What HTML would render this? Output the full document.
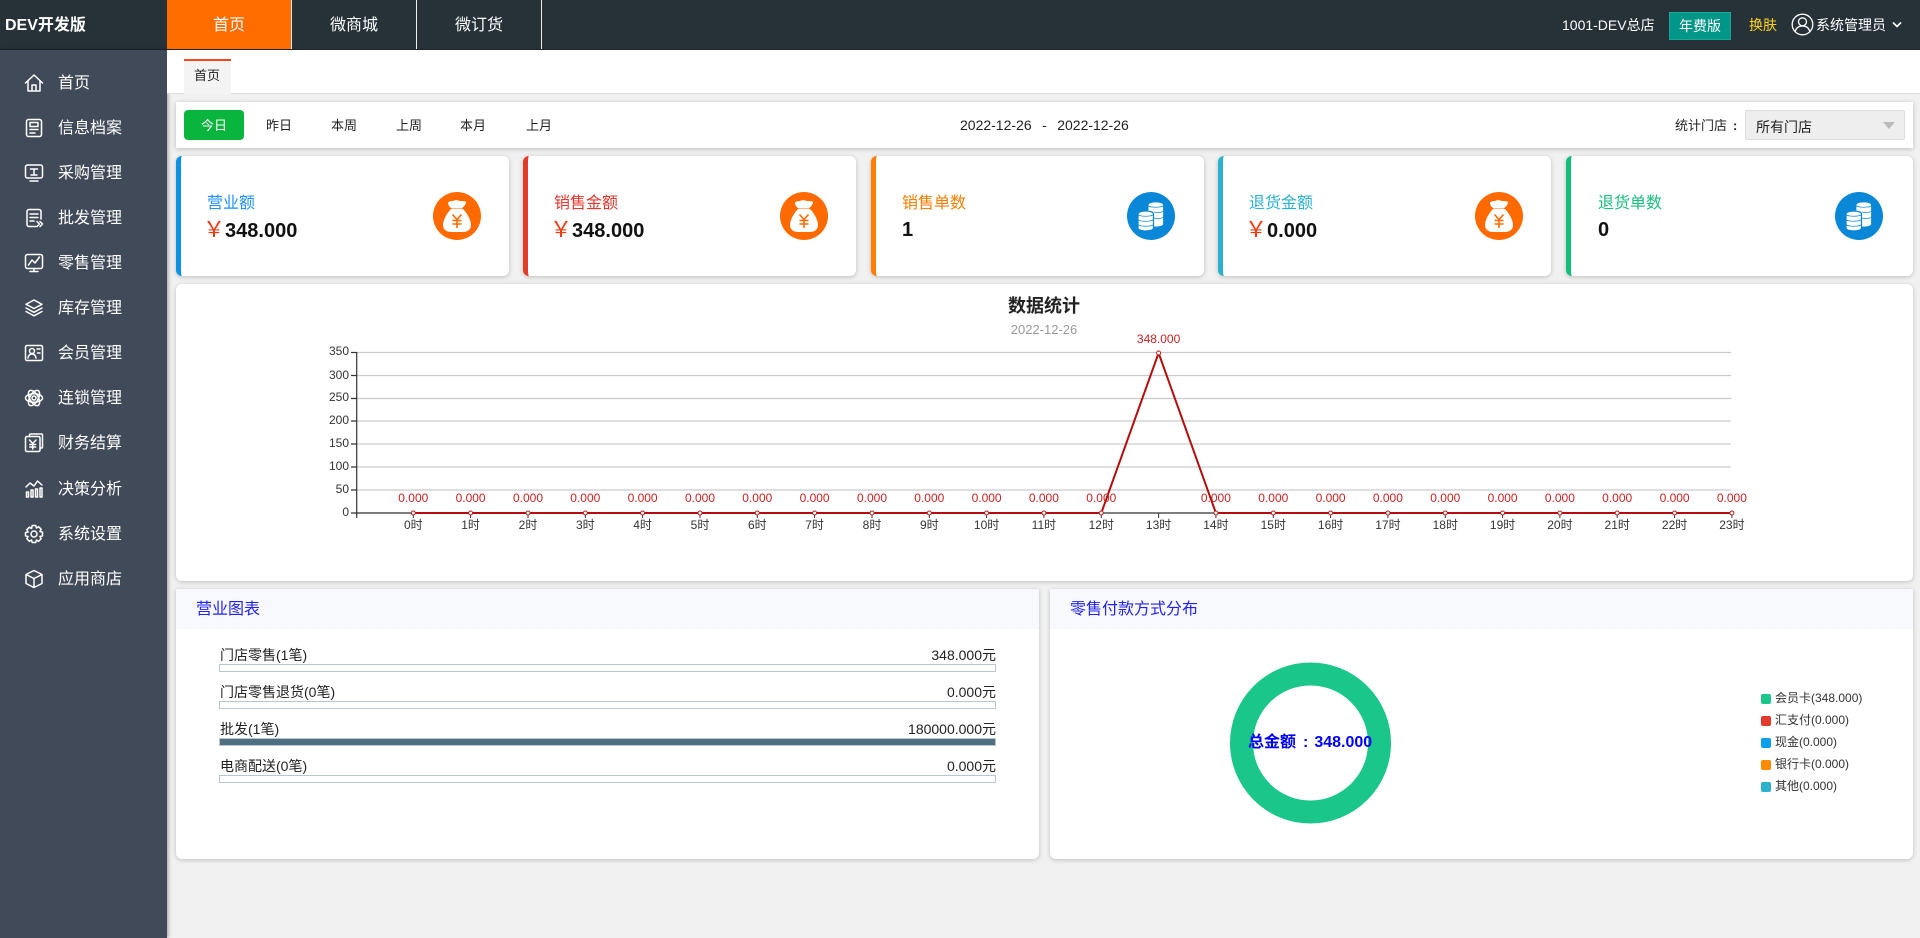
<!DOCTYPE html>
<html lang="zh"><head><meta charset="utf-8"><title>DEV开发版</title>
<style>
*{box-sizing:border-box}
html,body{margin:0;padding:0}
body{width:1920px;height:938px;overflow:hidden;position:relative;background:#f1f1f1;font-family:"Liberation Sans","Noto Sans CJK SC",sans-serif;color:#222}
.a{position:absolute}
.t{position:absolute;white-space:nowrap;line-height:20px}
.header{left:0;top:0;width:1920px;height:50px;background:#263238;border-bottom:1px solid #1c252c}
.logo{left:5px;top:16px;font-size:16px;font-weight:bold;color:#fff}
.nav{top:0;width:125px;height:49px;color:#fff;font-size:16px;text-align:center;line-height:51px;border-right:1px solid #eee}
.side{left:0;top:50px;width:167px;height:888px;background:#414a58;box-shadow:1px 0 4px rgba(0,0,0,.35)}
.mi{position:absolute;left:58px;color:#fff;font-size:16px;line-height:20px;white-space:nowrap;margin-top:1px}
.ic{position:absolute;left:24px;width:20px;height:20px;fill:none;stroke:#fff;stroke-width:1.5;stroke-linejoin:round;stroke-linecap:round}
.panel{background:#fff;box-shadow:0 1px 5px rgba(0,0,0,.22)}
.f{top:116px;font-size:13px;color:#222;width:40px;text-align:center}
.card{top:156px;width:333px;height:120px;background:#fff;border-radius:6px;border-left:5px solid;box-shadow:0 1px 5px rgba(0,0,0,.22)}
.lb{top:194px;font-size:16px}
.val{top:219px;font-size:20px;font-weight:bold;color:#111;line-height:22px}
.val i{font-style:normal;font-weight:normal;color:#f03a10;font-size:22px;margin-left:-4px;margin-right:0}
.circ{top:192px;width:48px;height:48px}
.bar{left:219px;width:777px;height:8px;border:1px solid #b9c6d0;background:#fff}
.bl{left:220px;font-size:14px;color:#222}
.br{right:924px;font-size:14px;color:#222}
.ttl{top:600px;font-size:16px;color:#2222ee}
.lg{left:1775px;font-size:12px;color:#333;line-height:16px;white-space:nowrap;position:absolute;margin-top:-2px}
.mk{position:absolute;left:1761px;width:10px;height:10px;border-radius:2px;margin-top:-1px}
</style></head><body>

<div class="a header"></div>
<div class="t logo">DEV开发版</div>
<div class="a nav" style="left:167px;background:#ff6c00">首页</div>
<div class="a nav" style="left:292px">微商城</div>
<div class="a nav" style="left:417px">微订货</div>
<div class="t" style="left:1562px;top:15px;font-size:14px;color:#fff">1001-DEV总店</div>
<div class="a" style="left:1669px;top:12px;width:62px;height:28px;background:#009688;border:1px solid #16a99a;color:#fff;font-size:14px;line-height:27px;text-align:center">年费版</div>
<div class="t" style="left:1749px;top:15px;font-size:14px;color:#ffd21f">换肤</div>
<svg class="a" style="left:1791px;top:13px" width="23" height="23" viewBox="0 0 23 23" fill="none" stroke="#fff" stroke-width="1.3"><circle cx="11.5" cy="11.5" r="10.3"/><circle cx="11.5" cy="8.8" r="4"/><path d="M4.2 18.6c1-4 4-5.6 7.3-5.6s6.300 1.600 7.300 5.600"/></svg>
<div class="t" style="left:1816px;top:15px;font-size:14px;color:#fff">系统管理员</div>
<svg class="a" style="left:1892px;top:21px" width="10" height="8" viewBox="0 0 10 8" fill="none" stroke="#fff" stroke-width="1.6"><path d="M1 1.500l4 4 4-4"/></svg>

<div class="a side"></div>
<svg class="ic" style="top:73px" viewBox="0 0 20 20"><path d="M1.500 10L10 2l8.500 8M4 8v10h12V8M8 18v-6h4v6"/></svg>
<div class="mi" style="top:73px">首页</div>
<svg class="ic" style="top:118px" viewBox="0 0 20 20"><rect x="2.500" y="1.500" width="15" height="17" rx="2"/><rect x="6" y="4.500" width="8" height="4"/><path d="M6 11.500h8M6 15h5"/></svg>
<div class="mi" style="top:118px">信息档案</div>
<svg class="ic" style="top:163px" viewBox="0 0 20 20"><rect x="1.500" y="2" width="17" height="13" rx="2"/><path d="M6 18h8M6.500 6h7M10 6v6M7 12h6"/></svg>
<div class="mi" style="top:163px">采购管理</div>
<svg class="ic" style="top:208px" viewBox="0 0 20 20"><path d="M17 11V3.500a2 2 0 0 0-2-2H5a2 2 0 0 0-2 2v13a2 2 0 0 0 2 2h7M6 6h8M6 9.500h8M6 13h4M13 13.500l2.500 2.500-2.500 2.500M16 13.500l2.500 2.500-2.500 2.500"/></svg>
<div class="mi" style="top:208px">批发管理</div>
<svg class="ic" style="top:253px" viewBox="0 0 20 20"><rect x="1.500" y="1.500" width="17" height="14" rx="2"/><path d="M6 18.500h8M4.500 12l3.500-5 3 3 4.500-6M10 15.500v3"/></svg>
<div class="mi" style="top:253px">零售管理</div>
<svg class="ic" style="top:298px" viewBox="0 0 20 20"><path d="M10 2l8 4.300-8 4.200-8-4.200zM2 10l8 4.300 8-4.300M2 13.500l8 4.300 8-4.300"/></svg>
<div class="mi" style="top:298px">库存管理</div>
<svg class="ic" style="top:343px" viewBox="0 0 20 20"><rect x="1.500" y="2.500" width="17" height="15" rx="1.500"/><circle cx="8" cy="8" r="2.500"/><path d="M4 15c.5-3 2-4 4-4s3.500 1 4 4M13 6h3M13.500 10h2.500"/></svg>
<div class="mi" style="top:343px">会员管理</div>
<svg class="ic" style="top:388px" viewBox="0 0 20 20"><ellipse cx="10" cy="10" rx="8.500" ry="4.200"/><ellipse cx="10" cy="10" rx="8.500" ry="4.200" transform="rotate(60 10 10)"/><ellipse cx="10" cy="10" rx="8.500" ry="4.200" transform="rotate(120 10 10)"/><circle cx="10" cy="10" r="2"/></svg>
<div class="mi" style="top:388px">连锁管理</div>
<svg class="ic" style="top:433px" viewBox="0 0 20 20"><path d="M5.500 3.500V2a1 1 0 0 1 1-1h11a1 1 0 0 1 1 1v12a1 1 0 0 1-1 1h-1.500"/><rect x="1.500" y="3.500" width="14.500" height="15" rx="1.500"/><path d="M5.500 7l3.200 3.500L12 7M8.700 10.500V16M5.800 11.500h5.800M5.800 14h5.800"/></svg>
<div class="mi" style="top:433px">财务结算</div>
<svg class="ic" style="top:479px" viewBox="0 0 20 20"><path d="M2 8l4-4 4 3 3.500-5L18 6M2.500 18v-5h2v5zM7 18v-7h2v7zM11.500 18v-8h2v8zM16 18v-9h2v9z"/></svg>
<div class="mi" style="top:479px">决策分析</div>
<svg class="ic" style="top:524px" viewBox="0 0 20 20"><path d="M8.200 1.500h3.600l.6 2.500 2.200-1.300 2.600 2.600-1.300 2.200 2.600.6v3.800l-2.600.6 1.300 2.200-2.600 2.600-2.200-1.300-.6 2.500H8.200l-.6-2.500-2.200 1.300-2.600-2.600 1.300-2.200-2.600-.6V8.600l2.600-.6-1.300-2.200 2.600-2.600 2.200 1.300z"/><circle cx="10" cy="10" r="3"/></svg>
<div class="mi" style="top:524px">系统设置</div>
<svg class="ic" style="top:569px" viewBox="0 0 20 20"><path d="M10 1.500l8 4v9l-8 4-8-4v-9zM2 5.500l8 4 8-4M10 9.500v9"/></svg>
<div class="mi" style="top:569px">应用商店</div>

<div class="a" style="left:167px;top:50px;width:1753px;height:44px;background:#fff;border-bottom:1px solid #ddd"></div>
<div class="a" style="left:184px;top:59px;width:47px;height:35px;background:#f4f4f4;border-top:2px solid #f4471c"></div>
<div class="t" style="left:194px;top:66px;font-size:13px;color:#222">首页</div>

<div class="a panel" style="left:176px;top:102px;width:1737px;height:46px"></div>
<div class="a" style="left:184px;top:110px;width:60px;height:30px;background:#09b53c;border-radius:4px;color:#fff;font-size:13px;line-height:31px;text-align:center">今日</div>
<div class="t f" style="left:259px">昨日</div>
<div class="t f" style="left:324px">本周</div>
<div class="t f" style="left:389px">上周</div>
<div class="t f" style="left:453px">本月</div>
<div class="t f" style="left:519px">上月</div>
<div class="t" style="left:960px;top:115px;font-size:14px;color:#222;white-space:pre;word-spacing:-.4px">2022-12-26   -   2022-12-26</div>
<div class="t" style="left:1675px;top:116px;font-size:13px;color:#222">统计门店<span style="margin-left:6px;font-weight:bold">:</span></div>
<div class="a" style="left:1745px;top:110px;width:160px;height:30px;background:#eee;border:1px solid #ddd;border-radius:2px"></div>
<div class="t" style="left:1756px;top:117px;font-size:14px;color:#222">所有门店</div>
<div class="a" style="left:1883px;top:122px;width:0;height:0;border-left:6px solid transparent;border-right:6px solid transparent;border-top:7px solid #bbb"></div>

<div class="a card" style="left:176px;border-left-color:#0c92e0"></div>
<div class="a card" style="left:523px;border-left-color:#e43a2c"></div>
<div class="a card" style="left:871px;border-left-color:#ff7d00"></div>
<div class="a card" style="left:1218px;border-left-color:#2bb0d2"></div>
<div class="a card" style="left:1566px;width:347px;border-left-color:#12bf78"></div>

<div class="t lb" style="left:207px;color:#1e90ff">营业额</div>
<div class="t val" style="left:207px"><i>￥</i>348.000</div>
<div class="t lb" style="left:554px;color:#e8342a">销售金额</div>
<div class="t val" style="left:554px"><i>￥</i>348.000</div>
<div class="t lb" style="left:902px;color:#ff7d00">销售单数</div>
<div class="t val" style="left:902px">1</div>
<div class="t lb" style="left:1249px;color:#2bb0d2">退货金额</div>
<div class="t val" style="left:1249px"><i>￥</i>0.000</div>
<div class="t lb" style="left:1598px;color:#1abf7c">退货单数</div>
<div class="t val" style="left:1598px">0</div>

<svg class="a circ" style="left:433px" viewBox="0 0 48 48"><circle cx="24" cy="24" r="24" fill="#ff6a00"/><path fill="#fff" d="M15 10.500c2-2 5-1 6-2 2-1 5 0 6 .5 2 0 5 0 6 1 0 3-3 5-4 6.500H19c-2-1-4-3-4-6zM18 17h12c4 4 8 11 8 16 0 5-4 7-8 7H18c-4 0-8-2-8-7 0-5 4-12 8-16z"/><path fill="none" stroke="#ff6a00" stroke-width="1.600" d="M19.500 22.500l4.500 5 4.500-5M24 27.500V36M19.500 28.500h9M19.500 32h9"/></svg>
<svg class="a circ" style="left:780px" viewBox="0 0 48 48"><circle cx="24" cy="24" r="24" fill="#ff6a00"/><path fill="#fff" d="M15 10.500c2-2 5-1 6-2 2-1 5 0 6 .5 2 0 5 0 6 1 0 3-3 5-4 6.500H19c-2-1-4-3-4-6zM18 17h12c4 4 8 11 8 16 0 5-4 7-8 7H18c-4 0-8-2-8-7 0-5 4-12 8-16z"/><path fill="none" stroke="#ff6a00" stroke-width="1.600" d="M19.500 22.500l4.500 5 4.500-5M24 27.500V36M19.500 28.500h9M19.500 32h9"/></svg>
<svg class="a circ" style="left:1127px" viewBox="0 0 48 48"><circle cx="24" cy="24" r="24" fill="#0a87d6"/><path fill="#fff" stroke="#0a87d6" stroke-width=".8" d="M21 13c0-4 15.500-4 15.500 0v19c0 4-15.500 4-15.500 0z"/><path fill="none" stroke="#0a87d6" stroke-width=".7" d="M21 13c0 3 15.500 3 15.500 0M27 20c3 1 8 .5 9.500-1M27 26c3 1 8 .5 9.500-1"/><path fill="#fff" stroke="#0a87d6" stroke-width="1.200" d="M11 22c0-4 15.500-4 15.500 0v14c0 4-15.500 4-15.500 0z"/><path fill="none" stroke="#0a87d6" stroke-width=".7" d="M11 22c0 3 15.500 3 15.500 0M11 27c0 3 15.500 3 15.500 0M11 32c0 3 15.500 3 15.500 0"/></svg>
<svg class="a circ" style="left:1475px" viewBox="0 0 48 48"><circle cx="24" cy="24" r="24" fill="#ff6a00"/><path fill="#fff" d="M15 10.500c2-2 5-1 6-2 2-1 5 0 6 .5 2 0 5 0 6 1 0 3-3 5-4 6.500H19c-2-1-4-3-4-6zM18 17h12c4 4 8 11 8 16 0 5-4 7-8 7H18c-4 0-8-2-8-7 0-5 4-12 8-16z"/><path fill="none" stroke="#ff6a00" stroke-width="1.600" d="M19.500 22.500l4.500 5 4.500-5M24 27.500V36M19.500 28.500h9M19.500 32h9"/></svg>
<svg class="a circ" style="left:1835px" viewBox="0 0 48 48"><circle cx="24" cy="24" r="24" fill="#0a87d6"/><path fill="#fff" stroke="#0a87d6" stroke-width=".8" d="M21 13c0-4 15.500-4 15.500 0v19c0 4-15.500 4-15.500 0z"/><path fill="none" stroke="#0a87d6" stroke-width=".7" d="M21 13c0 3 15.500 3 15.500 0M27 20c3 1 8 .5 9.500-1M27 26c3 1 8 .5 9.500-1"/><path fill="#fff" stroke="#0a87d6" stroke-width="1.200" d="M11 22c0-4 15.500-4 15.500 0v14c0 4-15.500 4-15.500 0z"/><path fill="none" stroke="#0a87d6" stroke-width=".7" d="M11 22c0 3 15.500 3 15.500 0M11 27c0 3 15.500 3 15.500 0M11 32c0 3 15.500 3 15.500 0"/></svg>

<div class="a panel" style="left:176px;top:284px;width:1737px;height:297px;border-radius:6px"></div>
<svg class="a" style="left:0;top:0" width="1920" height="938" viewBox="0 0 1920 938" font-family="'Liberation Sans','Noto Sans CJK SC',sans-serif" font-size="12">
<text x="1044" y="312" text-anchor="middle" font-size="18" font-weight="bold" fill="#222">数据统计</text>
<text x="1044" y="334" text-anchor="middle" font-size="13" fill="#999">2022-12-26</text>
<g stroke="#ccc" stroke-width="1.300"><path d="M357 352.500H1731M357 375.500H1731M357 398.500H1731M357 421H1731M357 444H1731M357 467H1731M357 490H1731"/></g>
<path d="M356.700 352V518M351 352.500h6M351 375.500h6M351 398.500h6M351 421h6M351 444h6M351 467h6M351 490h6M351 513h6M356.700 513H1732" stroke="#333" stroke-width="1.200" fill="none"/>
<path stroke="#333" stroke-width="1" d="M413.300 513v5M470.600 513v5M528 513v5M585.300 513v5M642.600 513v5M700 513v5M757.300 513v5M814.600 513v5M872 513v5M929.300 513v5M986.600 513v5M1043.900 513v5M1101.300 513v5M1158.600 513v5M1215.900 513v5M1273.300 513v5M1330.600 513v5M1387.900 513v5M1445.300 513v5M1502.600 513v5M1559.900 513v5M1617.200 513v5M1674.600 513v5M1731.900 513v5"/>
<g fill="#333" text-anchor="end"><text x="349" y="355">350</text><text x="349" y="379">300</text><text x="349" y="401">250</text><text x="349" y="424">200</text><text x="349" y="447">150</text><text x="349" y="470">100</text><text x="349" y="493">50</text><text x="349" y="516">0</text></g>
<path d="M413.300 513H1101.300L1158.600 353 1215.900 513H1731.900" fill="none" stroke="#b50d0d" stroke-width="2"/>
<g fill="#fff" stroke="#c01818" stroke-width="1"><circle cx="413.300" cy="513" r="2"/><circle cx="470.600" cy="513" r="2"/><circle cx="528" cy="513" r="2"/><circle cx="585.300" cy="513" r="2"/><circle cx="642.600" cy="513" r="2"/><circle cx="700" cy="513" r="2"/><circle cx="757.300" cy="513" r="2"/><circle cx="814.600" cy="513" r="2"/><circle cx="872" cy="513" r="2"/><circle cx="929.300" cy="513" r="2"/><circle cx="986.600" cy="513" r="2"/><circle cx="1043.900" cy="513" r="2"/><circle cx="1101.300" cy="513" r="2"/><circle cx="1158.600" cy="353" r="2"/><circle cx="1215.900" cy="513" r="2"/><circle cx="1273.300" cy="513" r="2"/><circle cx="1330.600" cy="513" r="2"/><circle cx="1387.900" cy="513" r="2"/><circle cx="1445.300" cy="513" r="2"/><circle cx="1502.600" cy="513" r="2"/><circle cx="1559.900" cy="513" r="2"/><circle cx="1617.200" cy="513" r="2"/><circle cx="1674.600" cy="513" r="2"/><circle cx="1731.900" cy="513" r="2"/></g>
<g fill="#cc2222" text-anchor="middle"><text x="413.300" y="502">0.000</text><text x="470.600" y="502">0.000</text><text x="528" y="502">0.000</text><text x="585.300" y="502">0.000</text><text x="642.600" y="502">0.000</text><text x="700" y="502">0.000</text><text x="757.300" y="502">0.000</text><text x="814.600" y="502">0.000</text><text x="872" y="502">0.000</text><text x="929.300" y="502">0.000</text><text x="986.600" y="502">0.000</text><text x="1043.900" y="502">0.000</text><text x="1101.300" y="502">0.000</text><text x="1158.600" y="343">348.000</text><text x="1215.900" y="502">0.000</text><text x="1273.300" y="502">0.000</text><text x="1330.600" y="502">0.000</text><text x="1387.900" y="502">0.000</text><text x="1445.300" y="502">0.000</text><text x="1502.600" y="502">0.000</text><text x="1559.900" y="502">0.000</text><text x="1617.200" y="502">0.000</text><text x="1674.600" y="502">0.000</text><text x="1731.900" y="502">0.000</text></g>
<g fill="#333" text-anchor="middle"><text x="413.300" y="529">0时</text><text x="470.600" y="529">1时</text><text x="528" y="529">2时</text><text x="585.300" y="529">3时</text><text x="642.600" y="529">4时</text><text x="700" y="529">5时</text><text x="757.300" y="529">6时</text><text x="814.600" y="529">7时</text><text x="872" y="529">8时</text><text x="929.300" y="529">9时</text><text x="986.600" y="529">10时</text><text x="1043.900" y="529">11时</text><text x="1101.300" y="529">12时</text><text x="1158.600" y="529">13时</text><text x="1215.900" y="529">14时</text><text x="1273.300" y="529">15时</text><text x="1330.600" y="529">16时</text><text x="1387.900" y="529">17时</text><text x="1445.300" y="529">18时</text><text x="1502.600" y="529">19时</text><text x="1559.900" y="529">20时</text><text x="1617.200" y="529">21时</text><text x="1674.600" y="529">22时</text><text x="1731.900" y="529">23时</text></g>
</svg>

<div class="a panel" style="left:176px;top:589px;width:863px;height:270px;border-radius:0 0 6px 6px"></div>
<div class="a" style="left:176px;top:589px;width:863px;height:40px;background:#f8f9fd"></div>
<div class="t ttl" style="left:196px">营业图表</div>
<div class="t bl" style="top:645px">门店零售(1笔)</div><div class="t br" style="top:645px">348.000元</div>
<div class="a bar" style="top:664px"></div>
<div class="t bl" style="top:682px">门店零售退货(0笔)</div><div class="t br" style="top:682px">0.000元</div>
<div class="a bar" style="top:701px"></div>
<div class="t bl" style="top:719px">批发(1笔)</div><div class="t br" style="top:719px">180000.000元</div>
<div class="a bar" style="top:738px;background:#4f6f80"></div>
<div class="t bl" style="top:756px">电商配送(0笔)</div><div class="t br" style="top:756px">0.000元</div>
<div class="a bar" style="top:775px"></div>

<div class="a panel" style="left:1050px;top:589px;width:863px;height:270px;border-radius:0 0 6px 6px"></div>
<div class="a" style="left:1050px;top:589px;width:863px;height:40px;background:#f8f9fd"></div>
<div class="t ttl" style="left:1070px">零售付款方式分布</div>
<svg class="a" style="left:1220px;top:653px" width="180" height="180" viewBox="0 0 180 180"><circle cx="90.500" cy="90" r="69" fill="none" stroke="#1ac689" stroke-width="23"/></svg>
<div class="t" style="left:1248px;top:733px;font-size:16px;font-weight:bold;color:#0000ff">总金额<span style="margin:0 6px 0 7px">:</span>348.000</div>
<div class="mk" style="top:695px;background:#1ac689"></div><div class="lg" style="top:692px">会员卡(348.000)</div>
<div class="mk" style="top:717px;background:#e43a2c"></div><div class="lg" style="top:714px">汇支付(0.000)</div>
<div class="mk" style="top:739px;background:#0c9ded"></div><div class="lg" style="top:736px">现金(0.000)</div>
<div class="mk" style="top:761px;background:#ff8c00"></div><div class="lg" style="top:758px">银行卡(0.000)</div>
<div class="mk" style="top:783px;background:#2eb2cc"></div><div class="lg" style="top:780px">其他(0.000)</div>

</body></html>
